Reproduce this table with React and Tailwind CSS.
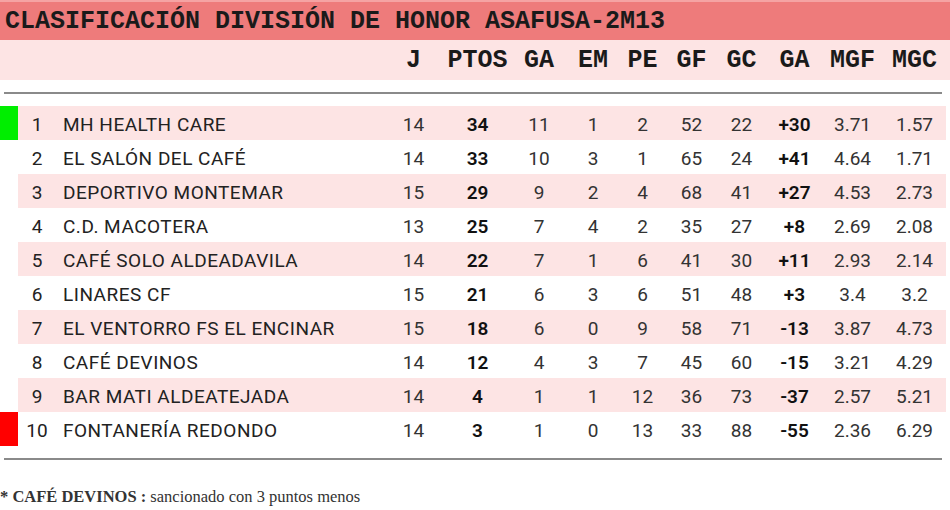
import React from "react";

const teams = [
  { pos: 1, name: "MH HEALTH CARE", j: 14, pts: 34, ga: 11, em: 1, pe: 2, gf: 52, gc: 22, dif: "+30", mgf: "3.71", mgc: "1.57", mark: "bg-[#00ee00]" },
  { pos: 2, name: "EL SALÓN DEL CAFÉ", j: 14, pts: 33, ga: 10, em: 3, pe: 1, gf: 65, gc: 24, dif: "+41", mgf: "4.64", mgc: "1.71" },
  { pos: 3, name: "DEPORTIVO MONTEMAR", j: 15, pts: 29, ga: 9, em: 2, pe: 4, gf: 68, gc: 41, dif: "+27", mgf: "4.53", mgc: "2.73" },
  { pos: 4, name: "C.D. MACOTERA", j: 13, pts: 25, ga: 7, em: 4, pe: 2, gf: 35, gc: 27, dif: "+8", mgf: "2.69", mgc: "2.08" },
  { pos: 5, name: "CAFÉ SOLO ALDEADAVILA", j: 14, pts: 22, ga: 7, em: 1, pe: 6, gf: 41, gc: 30, dif: "+11", mgf: "2.93", mgc: "2.14" },
  { pos: 6, name: "LINARES CF", j: 15, pts: 21, ga: 6, em: 3, pe: 6, gf: 51, gc: 48, dif: "+3", mgf: "3.4", mgc: "3.2" },
  { pos: 7, name: "EL VENTORRO FS EL ENCINAR", j: 15, pts: 18, ga: 6, em: 0, pe: 9, gf: 58, gc: 71, dif: "-13", mgf: "3.87", mgc: "4.73" },
  { pos: 8, name: "CAFÉ DEVINOS", j: 14, pts: 12, ga: 4, em: 3, pe: 7, gf: 45, gc: 60, dif: "-15", mgf: "3.21", mgc: "4.29" },
  { pos: 9, name: "BAR MATI ALDEATEJADA", j: 14, pts: 4, ga: 1, em: 1, pe: 12, gf: 36, gc: 73, dif: "-37", mgf: "2.57", mgc: "5.21" },
  { pos: 10, name: "FONTANERÍA REDONDO", j: 14, pts: 3, ga: 1, em: 0, pe: 13, gf: 33, gc: 88, dif: "-55", mgf: "2.36", mgc: "6.29", mark: "bg-[#ff0000]" },
];

const headers = ["J", "PTOS", "GA", "EM", "PE", "GF", "GC", "GA", "MGF", "MGC"];

const gridCols =
  "grid grid-cols-[18px_38px_326px_63px_65px_58px_50px_49px_49px_51px_55px_61px_63px]";

const App = () => {
  return (
    <div className="w-[950px] h-[510px] bg-white overflow-hidden">
      {/* title */}
      <div className="h-[40px] bg-[#ee7b7b] border-t-2 border-[#f5a3a3] flex items-center pl-[5px] font-['Liberation_Mono',monospace] font-bold text-[25px] text-[#1a1a1a] leading-none">
        CLASIFICACIÓN DIVISIÓN DE HONOR ASAFUSA-2M13
      </div>

      {/* header */}
      <div className={`${gridCols} h-[40px] bg-[#fde4e4] items-center font-['Liberation_Mono',monospace] font-bold text-[25px] text-[#1a1a1a] leading-none`}>
        <div />
        <div />
        <div />
        {headers.map((h, i) => (
          <div key={i} className="text-center">
            {h}
          </div>
        ))}
      </div>

      <div className="pt-[12px] pl-[4px] pr-[8px]">
        <div className="h-[2px] bg-[#8a8a8a]" />
      </div>

      {/* rows */}
      <div className="mt-[12px] font-['Roboto',sans-serif] text-[19px] text-[#222] leading-none">
        {teams.map((t, i) => (
          <div key={t.pos} className={`${gridCols} h-[34px] items-center`}>
            <div className={`h-full ${t.mark || ""}`} />
            <div className={`h-full flex items-center justify-center pt-[2px] ${i % 2 === 0 ? "bg-[#fde4e4]" : ""}`}>
              {t.pos}
            </div>
            <div className={`h-full flex items-center pl-[7px] pt-[2px] tracking-[0.5px] ${i % 2 === 0 ? "bg-[#fde4e4]" : ""}`}>
              {t.name}
            </div>
            {[t.j, t.pts, t.ga, t.em, t.pe, t.gf, t.gc, t.dif, t.mgf, t.mgc].map((v, k) => (
              <div
                key={k}
                className={`h-full flex items-center justify-center pt-[2px] ${i % 2 === 0 ? "bg-[#fde4e4]" : ""} ${
                  k === 1 || k === 7 ? "font-semibold text-[#111]" : "text-[#333]"
                }`}
              >
                {v}
              </div>
            ))}
          </div>
        ))}
      </div>

      <div className="pt-[12px] pl-[4px] pr-[8px]">
        <div className="h-[2px] bg-[#8a8a8a]" />
      </div>

      <div className="mt-[29px] font-['Liberation_Serif',serif] text-[16.5px] text-[#333] leading-none">
        <span className="font-bold">* CAFÉ DEVINOS :</span> sancionado con 3 puntos menos
      </div>
    </div>
  );
};

export default App;
